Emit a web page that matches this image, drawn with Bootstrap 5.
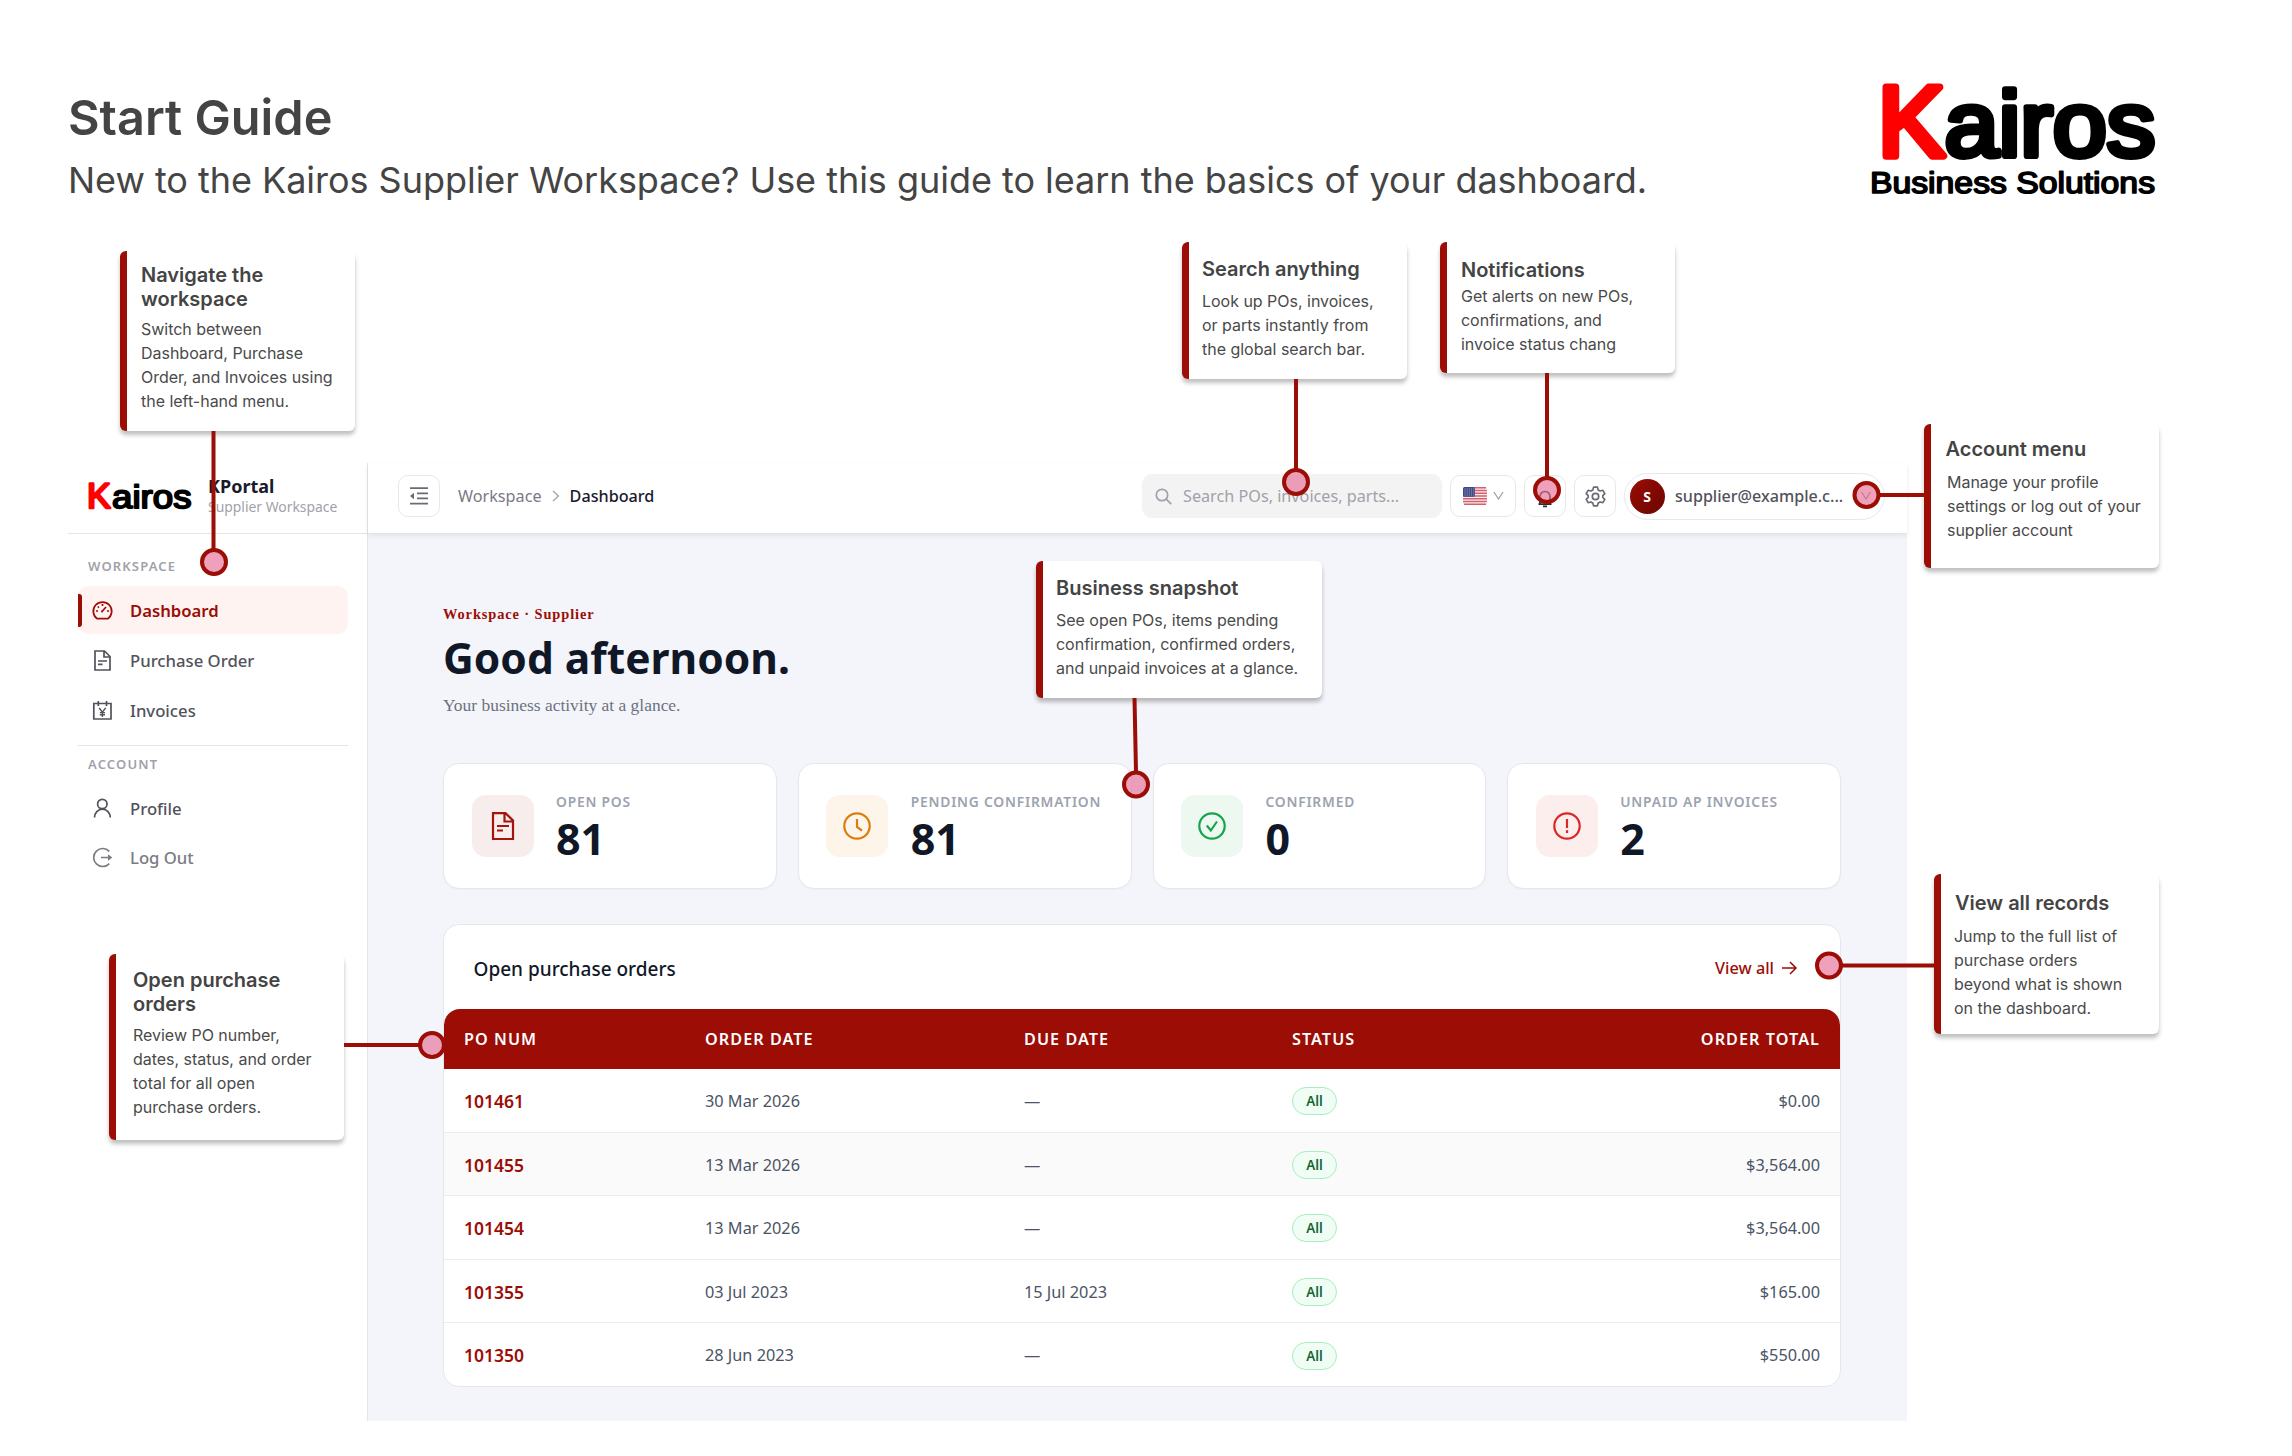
<!DOCTYPE html>
<html lang="en">
<head>
    <meta charset="UTF-8">
    <meta name="viewport" content="width=device-width, initial-scale=1.0">
    <title>Kairos Supplier Workspace - Start Guide</title>
    <link href="https://cdn.jsdelivr.net/npm/bootstrap@5.3.3/dist/css/bootstrap.min.css" rel="stylesheet">
    <style>
        :root { --kred: #9b0d05; --line: #e8e8ec; }
        body { width: 2292px; height: 1456px; overflow: hidden; background: #fff; font-family: "Noto Sans", sans-serif; color: #101828; }
        svg { display: block; flex: none; overflow: visible; }
        .ico { fill: none; stroke: currentColor; stroke-width: 1.7; }
        .thick { stroke-width: 2.2; }

        /* Guide header */
        .guide { position: relative; width: 2292px; height: 1456px; }
        .guide-head { height: 463px; padding: 0 122px 0 68px; font-family: Inter, sans-serif; color: #444; }
        .guide-title { font-size: 48.6px; line-height: 58px; font-weight: 600; margin: 89px 0 11px; }
        .guide-sub { font-size: 36px; line-height: 44px; letter-spacing: -.03px; margin: 0; white-space: nowrap; }
        .brand-logo { margin-top: 70px; }
        .logo-text { font-family: "Liberation Sans", Arial, sans-serif; stroke-linejoin: round; stroke-linecap: round; text-rendering: geometricPrecision; }

        /* App frame */
        .app { width: 1839px; height: 958px; margin-left: 68px; }
        .side { width: 300px; border-right: 1px solid #e5e5e9; flex: none; }
        .side-brand { height: 71px; border-bottom: 1px solid #e5e5e9; padding: 0 0 6px 20px; }
        .side-brand .names { margin-left: 15px; }
        .brand-name { font-size: 18px; line-height: 24px; font-weight: 700; color: #1a1a2e; }
        .brand-desc { font-size: 13.9px; line-height: 18px; color: #a1a1aa; white-space: nowrap; }
        .side-body { padding: 22px 19px 0 10px; }
        .side-label { font-size: 13px; line-height: 20px; font-weight: 600; letter-spacing: 1.15px; color: #a1a1aa; padding-left: 10px; margin-bottom: 10px; }
        .side-link { height: 48px; margin-bottom: 2px; padding: 1px 0 0 14px; gap: 17px; font-size: 16.7px; font-weight: 500; color: #52525b; border-radius: 10px; position: relative; text-decoration: none; }
        .side-link.on { background: #fff3f2; color: var(--kred); font-weight: 600; }
        .side-link.on::before { content: ""; position: absolute; left: 0; top: 8px; width: 4px; height: 33px; background: var(--kred); border-radius: 0 3px 3px 0; }
        .side-link.dim { color: #7b7b84; margin-top: -1px; }
        .side-rule { height: 1px; background: #e5e5e9; margin: 11px 0 8px; }

        .main { background: #f4f5fa; min-width: 0; }
        .top { height: 71px; background: #fff; border-bottom: 1px solid #e4e4ea; box-shadow: 0 2px 5px rgba(20,20,50,.08); padding: 0 22px 4px 30px; font-size: 16.2px; position: relative; }
        .sq { height: 42px; width: 42px; border: 1px solid var(--line); border-radius: 10px; background: #fff; color: #6b6b76; flex: none; }
        .sq.flag { width: 66px; gap: 6px; }
        .crumb { margin-left: 18px; color: #7a7a86; gap: 10px; }
        .crumb b { font-weight: 500; color: #1a1a2e; }
        .find { width: 300px; height: 44px; border-radius: 10px; background: #f3f3f4; color: #a1a1aa; padding-left: 13px; gap: 11px; font-size: 16.2px; }
        .me { width: 261px; height: 47px; border: 1px solid var(--line); border-radius: 24px; padding-left: 4.5px; gap: 10.5px; color: #52525b; font-weight: 500; font-size: 16.1px; }
        .me-dot { width: 35px; height: 35px; border-radius: 50%; background: linear-gradient(135deg, #9b0d05, #6b0500); color: #fff; font-size: 14px; font-weight: 700; }

        .content { padding: 70px 66px 0 75px; }
        .eyebrow { font: 700 14.4px/20px "Liberation Serif", serif; letter-spacing: .9px; color: var(--kred); margin-bottom: 8px; }
        .hello { font-size: 42.5px; line-height: 52px; font-weight: 700; margin-bottom: 8.5px; }
        .hello-sub { font: 17.45px/24px "Liberation Serif", serif; color: #6b7280; margin-bottom: 46.5px; }

        .stats { gap: 21px; }
        .stat { flex: 1 1 0; height: 126px; background: #fff; border: 1px solid #e6e7ed; border-radius: 16px; padding-left: 27.5px; gap: 22.5px; box-shadow: 0 1px 2px rgba(0,0,0,.03); }
        .stat-ico { width: 62px; height: 62px; border-radius: 14px; }
        .stat-ico.red { background: #f8eded; color: #a3140d; }
        .stat-ico.amber { background: #fdf4ea; color: #dc7d0b; }
        .stat-ico.green { background: #edf8f0; color: #16a34a; }
        .stat-ico.rose { background: #fdeeee; color: #dc2626; }
        .stat-name { font-size: 13.8px; line-height: 18px; font-weight: 600; letter-spacing: .8px; color: #9ca3af; white-space: nowrap; margin-top: 7px; }
        .stat-num { font-size: 43px; line-height: 56px; font-weight: 700; }

        .orders { margin-top: 35px; border: 1.5px solid #e6e7ed; border-radius: 16px; background: #fff; overflow: hidden; }
        .orders-head { height: 82px; padding: 0 43px 0 29.5px; }
        .orders-head h2 { font-size: 19px; font-weight: 500; margin: 6px 0 0; }
        .orders-head a { font-size: 16.3px; font-weight: 500; color: var(--kred); text-decoration: none; gap: 8px; margin-top: 3.5px; }
        .orders-tbl { table-layout: fixed; margin: 1.5px 0 0; font-size: 16.3px; --bs-table-bg: transparent; --bs-table-color: #4a5466; }
        .orders-tbl > thead { height: 60px; }
        .orders-tbl > thead th { color: #fff; font-size: 16.2px; font-weight: 600; letter-spacing: 1.05px; padding: 2px 20px 0; border: 0; background: var(--kred); vertical-align: middle; }
        .orders-tbl > thead th:first-child { border-top-left-radius: 16px; }
        .orders-tbl > thead th:last-child { border-top-right-radius: 16px; }
        .orders-tbl > tbody td { height: 63.5px; padding: 2px 20px 0; vertical-align: middle; border-bottom: 1px solid #ececf0; }
        .orders-tbl > tbody tr:last-child td { border-bottom: 0; }
        .orders-tbl > tbody tr:nth-child(2) { background: #fafafa; }
        .orders-tbl .po { font-weight: 600; font-size: 17.5px; color: var(--kred); }
        .pill { display: inline-block; width: 45px; height: 28px; line-height: 26px; text-align: center; font-size: 13.4px; font-weight: 600; color: #166534; background: #f0fdf4; border: 1.5px solid #a7efc0; border-radius: 14px; vertical-align: middle; }

        /* Callouts float over the app at the spots they explain */
        .tip { position: absolute; background: #fff; border-left: 7px solid var(--kred); border-radius: 6px; box-shadow: 0 4px 4px rgba(0,0,0,.25); font-family: Inter, sans-serif; color: #444; white-space: nowrap; }
        .tip h3 { font-size: 20px; line-height: 24px; font-weight: 600; margin: 0; }
        .tip p { font-size: 16px; line-height: 24px; letter-spacing: -.02px; color: #4a4a4a; margin: 0; }
        #tip-nav { left: 120px; top: 251px; width: 235px; height: 180px; padding: 12px 0 0 14px; }
        #tip-nav p { margin-top: 6px; }
        #tip-search { left: 1182px; top: 242px; width: 225px; height: 137px; padding: 15px 0 0 13px; }
        #tip-search p { margin-top: 8px; }
        #tip-bell { left: 1440px; top: 242px; width: 235px; height: 131px; padding: 16px 0 0 14px; }
        #tip-bell p { margin-top: 2px; }
        #tip-account { left: 1924px; top: 424px; width: 235px; height: 144px; padding: 13px 0 0 14.5px; }
        #tip-account p { margin: 9px 0 0 1.5px; }
        #tip-stats { left: 1036px; top: 561px; width: 286px; height: 137px; padding: 15px 0 0 13px; }
        #tip-stats p { margin-top: 8px; }
        #tip-all { left: 1934px; top: 874px; width: 225px; height: 160px; padding: 17px 0 0 14px; }
        #tip-all p { margin: 9px 0 0 -1px; }
        #tip-orders { left: 109px; top: 954px; width: 235px; height: 186px; padding: 14px 0 0 17px; }
        #tip-orders p { margin-top: 7px; }
        .wires { position: absolute; left: 0; top: 0; stroke: var(--kred); stroke-width: 4; fill: rgba(230,110,150,.65); }
    </style>
</head>
<body>
<div class="guide">

    <!-- Title and brand -->
    <header class="guide-head d-flex justify-content-between">
        <div>
            <h1 class="guide-title">Start Guide</h1>
            <p class="guide-sub">New to the Kairos Supplier Workspace? Use this guide to learn the basics of your dashboard.</p>
        </div>
        <svg class="brand-logo logo-text" width="310" height="140" viewBox="0 0 310 140">
            <text x="18" y="86" font-size="100" fill="#f00" stroke="#f00" stroke-width="7.4">K</text>
            <text x="84.500" y="85.500" font-size="92" stroke="#000" stroke-width="6.2" textLength="211" lengthAdjust="spacingAndGlyphs">airos</text>
            <text x="10" y="123" font-size="30" stroke="#000" stroke-width="1.6" textLength="285" lengthAdjust="spacingAndGlyphs">Business Solutions</text>
        </svg>
    </header>

    <!-- Portal -->
    <div class="app d-flex">
        <aside class="side">
            <div class="side-brand d-flex align-items-center">
                <svg class="logo-text" width="105" height="32" viewBox="0 0 105 32">
                    <text x="-1" y="29" font-size="35.5" fill="#f00" stroke="#f00" stroke-width="2.6">K</text>
                    <text x="24" y="29" font-size="32.5" stroke="#000" stroke-width="1.9" textLength="79.5" lengthAdjust="spacingAndGlyphs">airos</text>
                </svg>
                <div class="names">
                    <div class="brand-name">KPortal</div>
                    <div class="brand-desc">Supplier Workspace</div>
                </div>
            </div>
            <nav class="side-body">
                <div class="side-label">WORKSPACE</div>
                <a class="side-link on d-flex align-items-center">
                    <svg class="ico" width="21" height="21" viewBox="0 0 21 21"><path d="M5 18.6A9.2 9.2 0 1 1 16 18.6Z"/><path d="M10 11.5 14 7M10.5 4v2M4 11h2M15 11h2M5.8 6.5l1.2 1.2"/><circle cx="10" cy="11.6" r="1" fill="currentColor" stroke="none"/></svg>
                    Dashboard
                </a>
                <a class="side-link d-flex align-items-center">
                    <svg class="ico" width="21" height="21" viewBox="0 0 21 21"><path d="M3 1h9.5L18 6.5V20H3ZM12 1v6h6M6 11h9M6 14.3h4.5"/></svg>
                    Purchase Order
                </a>
                <a class="side-link d-flex align-items-center">
                    <svg class="ico" width="21" height="21" viewBox="0 0 21 21"><path d="M1.8 3.5h17.2V19H1.8ZM6.3 1v5M14.5 1v5"/><path d="m7.2 8 3.2 4.2L13.6 8M10.4 12v5M7.8 12.6H13M7.8 14.8H13" stroke-width="1.4"/></svg>
                    Invoices
                </a>
                <div class="side-rule"></div>
                <div class="side-label">ACCOUNT</div>
                <a class="side-link d-flex align-items-center">
                    <svg class="ico" width="21" height="21" viewBox="0 0 21 21"><circle cx="10.3" cy="6" r="4.7"/><path d="M2.5 19.5a7.9 8.4 0 0 1 15.8 0"/></svg>
                    Profile
                </a>
                <a class="side-link dim d-flex align-items-center">
                    <svg class="ico" width="21" height="21" viewBox="0 0 21 21"><path d="M17.3 4.4a9 9 0 1 0 0 12.2M9 10.5h8.5"/><path d="m16 7.3 4.3 3.2-4.3 3.2Z" fill="currentColor" stroke="none"/></svg>
                    Log Out
                </a>
            </nav>
        </aside>

        <div class="main flex-grow-1">
            <div class="top d-flex align-items-center">
                <span class="sq d-flex align-items-center justify-content-center">
                    <svg class="ico" width="18" height="18" viewBox="0 0 18 18"><path d="M0 1.2h18M7 6.4h11M7 11.4h11M0 16.6h18"/><path d="M0 9l4-3.2v6.4Z" fill="currentColor" stroke="none"/></svg>
                </span>
                <div class="crumb d-flex align-items-center">
                    <span>Workspace</span>
                    <svg class="ico" width="8" height="12" viewBox="0 0 8 12"><path d="m1 1 5.5 5L1 11" stroke="#a1a1aa" stroke-width="1.3"/></svg>
                    <b>Dashboard</b>
                </div>
                <div class="find d-flex align-items-center ms-auto">
                    <svg class="ico" width="17" height="17" viewBox="0 0 17 17"><circle cx="7" cy="7" r="5.7"/><path d="m11.2 11.2 5 5"/></svg>
                    Search POs, invoices, parts...
                </div>
                <span class="sq flag d-flex align-items-center justify-content-center ms-2">
                    <svg width="24" height="18" viewBox="0 0 24 18"><rect width="24" height="18" rx="2" fill="#f6eeee"/><path d="M1 .8h22M0 3.5h24M0 6.3h24M0 9h24M0 11.8h24M0 14.5h24M1 17.2h22" stroke="#d4606c" stroke-width="1.4"/><rect width="12" height="9.7" rx="1.5" fill="#3f4a86"/><path d="M1.5 2h10M1.5 4h10M1.5 6h10M1.5 8h10" stroke="#aab0d0" stroke-width=".9" stroke-dasharray="1 1.2"/></svg>
                    <svg class="ico" width="11" height="10" viewBox="0 0 11 10"><path d="m1 1 4.5 7L10 1" stroke="#a1a1aa" stroke-width="1.3"/></svg>
                </span>
                <span class="sq d-flex align-items-center justify-content-center ms-2">
                    <svg class="ico" width="18" height="20" viewBox="0 0 18 20"><path d="M4 18v-7.5a5 5 0 0 1 10 0V18M2.500 18.200h13M7 20.300h4" stroke="#2c2c34"/></svg>
                </span>
                <span class="sq d-flex align-items-center justify-content-center ms-2">
                    <svg class="ico" width="21" height="21" viewBox="0 0 21 21"><path d="M8.6 1.2h3.8l.8 2.7 1.9 1.1 2.8-.7 1.9 3.3-2 2v1.8l2 2-1.9 3.3-2.8-.7-1.9 1.1-.8 2.7H8.6l-.8-2.7L5.9 16l-2.8.7-1.9-3.3 2-2V9.6l-2-2 1.9-3.3 2.8.7 1.9-1.1Z" stroke-linejoin="round"/><circle cx="10.5" cy="10.5" r="3.2"/></svg>
                </span>
                <div class="me d-flex align-items-center ms-2">
                    <span class="me-dot d-flex align-items-center justify-content-center">S</span>
                    <span>supplier@example.c...</span>
                    <svg class="ico ms-auto me-2 pe-1" width="16" height="10" viewBox="0 0 11 10"><path d="m1 1 4.5 7L10 1" stroke="#8f8f99" stroke-width="1.3"/></svg>
                </div>
            </div>

            <div class="content">
                <div class="eyebrow">Workspace · Supplier</div>
                <h1 class="hello">Good afternoon.</h1>
                <p class="hello-sub">Your business activity at a glance.</p>

                <div class="stats d-flex">
                    <div class="stat d-flex align-items-center">
                        <span class="stat-ico red d-flex align-items-center justify-content-center">
                            <svg class="ico thick" width="28" height="28" viewBox="0 0 28 28"><path d="M4 1.2h12.5L24 8.5V27H4ZM15.5 1.5v8H24M8 14h12M8 18.5h6"/></svg>
                        </span>
                        <div>
                            <div class="stat-name">OPEN POS</div>
                            <div class="stat-num">81</div>
                        </div>
                    </div>
                    <div class="stat d-flex align-items-center">
                        <span class="stat-ico amber d-flex align-items-center justify-content-center">
                            <svg class="ico thick" width="28" height="28" viewBox="0 0 28 28"><circle cx="14" cy="14" r="12.7"/><path d="M14 7v8l5 3.7"/></svg>
                        </span>
                        <div>
                            <div class="stat-name">PENDING CONFIRMATION</div>
                            <div class="stat-num">81</div>
                        </div>
                    </div>
                    <div class="stat d-flex align-items-center">
                        <span class="stat-ico green d-flex align-items-center justify-content-center">
                            <svg class="ico thick" width="28" height="28" viewBox="0 0 28 28"><circle cx="14" cy="14" r="12.7"/><path d="m8.8 13.5 4 5 6.2-9"/></svg>
                        </span>
                        <div>
                            <div class="stat-name">CONFIRMED</div>
                            <div class="stat-num">0</div>
                        </div>
                    </div>
                    <div class="stat d-flex align-items-center">
                        <span class="stat-ico rose d-flex align-items-center justify-content-center">
                            <svg class="ico thick" width="28" height="28" viewBox="0 0 28 28"><circle cx="14" cy="14" r="12.7"/><path d="M14 7v9M14 18.3V21"/></svg>
                        </span>
                        <div>
                            <div class="stat-name">UNPAID AP INVOICES</div>
                            <div class="stat-num">2</div>
                        </div>
                    </div>
                </div>

                <div class="orders">
                    <div class="orders-head d-flex align-items-center justify-content-between">
                        <h2>Open purchase orders</h2>
                        <a class="d-flex align-items-center">View all
                            <svg class="ico" width="15" height="14" viewBox="0 0 15 14"><path d="M0 7h13M8 1l6 6-6 6" stroke-width="1.5"/></svg>
                        </a>
                    </div>
                    <table class="table orders-tbl">
                        <colgroup><col width="241"><col width="319"><col width="268"><col width="280"><col></colgroup>
                        <thead>
                            <tr><th>PO NUM</th><th>ORDER DATE</th><th>DUE DATE</th><th>STATUS</th><th class="text-end">ORDER TOTAL</th></tr>
                        </thead>
                        <tbody>
                            <tr><td class="po">101461</td><td>30 Mar 2026</td><td>—</td><td><span class="pill">All</span></td><td class="text-end">$0.00</td></tr>
                            <tr><td class="po">101455</td><td>13 Mar 2026</td><td>—</td><td><span class="pill">All</span></td><td class="text-end">$3,564.00</td></tr>
                            <tr><td class="po">101454</td><td>13 Mar 2026</td><td>—</td><td><span class="pill">All</span></td><td class="text-end">$3,564.00</td></tr>
                            <tr><td class="po">101355</td><td>03 Jul 2023</td><td>15 Jul 2023</td><td><span class="pill">All</span></td><td class="text-end">$165.00</td></tr>
                            <tr><td class="po">101350</td><td>28 Jun 2023</td><td>—</td><td><span class="pill">All</span></td><td class="text-end">$550.00</td></tr>
                        </tbody>
                    </table>
                </div>
            </div>
        </div>
    </div>

    <!-- Callouts -->
    <div class="tip" id="tip-nav"><h3>Navigate the<br>workspace</h3><p>Switch between<br>Dashboard, Purchase<br>Order, and Invoices using<br>the left-hand menu.</p></div>
    <div class="tip" id="tip-search"><h3>Search anything</h3><p>Look up POs, invoices,<br>or parts instantly from<br>the global search bar.</p></div>
    <div class="tip" id="tip-bell"><h3>Notifications</h3><p>Get alerts on new POs,<br>confirmations, and<br>invoice status chang</p></div>
    <div class="tip" id="tip-account"><h3>Account menu</h3><p>Manage your profile<br>settings or log out of your<br>supplier account</p></div>
    <div class="tip" id="tip-stats"><h3>Business snapshot</h3><p>See open POs, items pending<br>confirmation, confirmed orders,<br>and unpaid invoices at a glance.</p></div>
    <div class="tip" id="tip-all"><h3>View all records</h3><p>Jump to the full list of<br>purchase orders<br>beyond what is shown<br>on the dashboard.</p></div>
    <div class="tip" id="tip-orders"><h3>Open purchase<br>orders</h3><p>Review PO number,<br>dates, status, and order<br>total for all open<br>purchase orders.</p></div>

    <!-- Connector lines with their end dots -->
    <svg class="wires" width="2292" height="1456" viewBox="0 0 2292 1456">
        <path d="M213.5 431V550M1296 379V470M1547 373V478M1878 495H1925M1134.5 698 1136 772M1841 965.5H1935M344 1045H420"/>
        <circle cx="214" cy="562" r="12"/>
        <circle cx="1296" cy="482" r="12"/>
        <circle cx="1547" cy="490" r="12"/>
        <circle cx="1866.5" cy="495" r="12"/>
        <circle cx="1136" cy="784.5" r="12"/>
        <circle cx="1829" cy="965.5" r="12"/>
        <circle cx="432" cy="1045" r="12"/>
    </svg>
</div>
<script src="https://cdn.jsdelivr.net/npm/bootstrap@5.3.3/dist/js/bootstrap.bundle.min.js"></script>
</body>
</html>
